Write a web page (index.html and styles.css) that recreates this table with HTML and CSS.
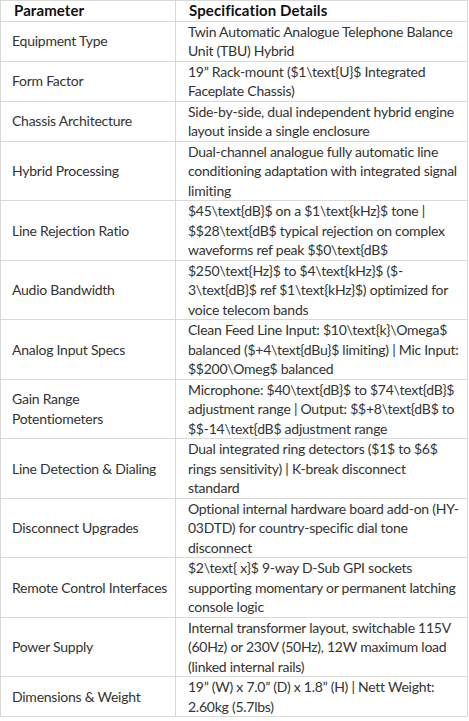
FILE: index.html
```html
<!DOCTYPE html>
<html lang="en">
<head>
<meta charset="utf-8">
<title>Specifications</title>
<link rel="stylesheet" href="styles.css">
</head>
<body>
<table class="spec">
  <colgroup><col class="c1"><col class="c2"></colgroup>
  <thead>
    <tr><th>Parameter</th><th>Specification Details</th></tr>
  </thead>
  <tbody>
    <tr><td>Equipment Type</td><td>Twin Automatic Analogue Telephone Balance<br>Unit (TBU) Hybrid</td></tr>
    <tr><td>Form Factor</td><td>19” Rack-mount ($1\text{U}$ Integrated<br>Faceplate Chassis)</td></tr>
    <tr><td>Chassis Architecture</td><td>Side-by-side, dual independent hybrid engine<br>layout inside a single enclosure</td></tr>
    <tr><td>Hybrid Processing</td><td>Dual-channel analogue fully automatic line<br>conditioning adaptation with integrated signal<br>limiting</td></tr>
    <tr><td>Line Rejection Ratio</td><td>$45\text{dB}$ on a $1\text{kHz}$ tone |<br>$$28\text{dB$ typical rejection on complex<br>waveforms ref peak $$0\text{dB$</td></tr>
    <tr><td>Audio Bandwidth</td><td>$250\text{Hz}$ to $4\text{kHz}$ ($-<br>3\text{dB}$ ref $1\text{kHz}$) optimized for<br>voice telecom bands</td></tr>
    <tr><td>Analog Input Specs</td><td>Clean Feed Line Input: $10\text{k}\Omega$<br>balanced ($+4\text{dBu}$ limiting) | Mic Input:<br>$$200\Omeg$ balanced</td></tr>
    <tr><td>Gain Range<br>Potentiometers</td><td>Microphone: $40\text{dB}$ to $74\text{dB}$<br>adjustment range | Output: $$+8\text{dB$ to<br>$$-14\text{dB$ adjustment range</td></tr>
    <tr><td>Line Detection &amp; Dialing</td><td>Dual integrated ring detectors ($1$ to $6$<br>rings sensitivity) | K-break disconnect<br>standard</td></tr>
    <tr><td>Disconnect Upgrades</td><td>Optional internal hardware board add-on (HY-<br>03DTD) for country-specific dial tone<br>disconnect</td></tr>
    <tr><td>Remote Control Interfaces</td><td>$2\text{ x}$ 9-way D-Sub GPI sockets<br>supporting momentary or permanent latching<br>console logic</td></tr>
    <tr><td>Power Supply</td><td>Internal transformer layout, switchable 115V<br>(60Hz) or 230V (50Hz), 12W maximum load<br>(linked internal rails)</td></tr>
    <tr><td>Dimensions &amp; Weight</td><td>19” (W) x 7.0” (D) x 1.8” (H) | Nett Weight:<br>2.60kg (5.7lbs)</td></tr>
  </tbody>
</table>
</body>
</html>
```

FILE: styles.css
```css
html, body {
  margin: 0;
  padding: 0;
  background: #ffffff;
}

.spec {
  border-collapse: collapse;
  width: 468px;
  table-layout: fixed;
  font-family: Lato, "Open Sans", sans-serif;
  font-size: 14px;
  letter-spacing: -0.25px;
  line-height: 19.5px;
  color: #333333;
}

.c1 { width: 175px; }

.spec th,
.spec td {
  border: 1px solid #d9d9d9;
  padding: 0 4px 0 12px;
  text-align: left;
  vertical-align: middle;
  white-space: nowrap;
}

.spec th {
  font-size: 15px;
  font-weight: 700;
  color: #111111;
  letter-spacing: 0.1px;
  padding-left: 13px;
}

.spec td:first-child {
  padding-left: 11px;
}
```
